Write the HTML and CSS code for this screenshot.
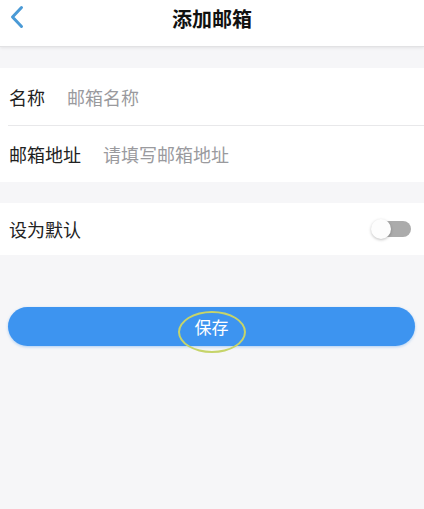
FILE: index.html
```html
<!DOCTYPE html>
<html lang="zh">
<head>
<meta charset="utf-8">
<link rel="stylesheet" href="styles.css">
</head>
<body>
<header class="topbar">
  <span class="back">
    <svg width="18" height="24" viewBox="0 0 18 24"><path d="M13.5 2.5 L4.5 12 L13.5 21.5" fill="none" stroke="#4a9ad6" stroke-width="3" stroke-linecap="round" stroke-linejoin="round"/></svg>
  </span>
  <h1 class="title">添加邮箱</h1>
</header>
<section class="group first">
  <div class="row">
    <span class="label">名称</span>
    <span class="placeholder">邮箱名称</span>
  </div>
  <div class="row">
    <span class="label">邮箱地址</span>
    <span class="placeholder">请填写邮箱地址</span>
  </div>
</section>
<section class="group second">
  <div class="row switch-row">
    <span class="label">设为默认</span>
    <span class="toggle"><span class="knob"></span></span>
  </div>
</section>
<div class="actions">
  <button class="save"><span class="save-text">保存</span></button>
</div>
</body>
</html>
```
FILE: styles.css
```css
html, body {
  margin: 0;
  padding: 0;
  background: #f6f6f8;
  font-family: "Noto Sans CJK SC", "Noto Sans", sans-serif;
  height: 100%;
}
.topbar {
  height: 46px;
  background: #fff;
  border-bottom: 1px solid #e2e2e4;
  box-shadow: 0 1px 3px rgba(0,0,0,0.08);
  display: flex;
  align-items: center;
  justify-content: center;
  position: relative;
}
.back {
  position: absolute;
  left: 8px;
  top: 5px;
  width: 18px;
  height: 24px;
}
.back svg { display: block; }
.title {
  margin: 0;
  font-size: 20px;
  font-weight: bold;
  color: #111;
  line-height: 1;
  margin-top: -9px;
}
.group {
  background: #fff;
  padding-left: 8px;
}
.group.first { margin-top: 21px; }
.group.second { margin-top: 21px; }
.row {
  display: flex;
  align-items: center;
  height: 56px;
  font-size: 18px;
}
.group.first .row:first-child {
  height: 57px;
  border-bottom: 1px solid #e8e8ea;
}
.label {
  color: #222;
  margin-left: 1px;
  margin-right: 22px;
}
.placeholder {
  color: #9a9a9e;
}
.switch-row {
  height: 52px;
  justify-content: space-between;
  padding-right: 13px;
}
.toggle {
  position: relative;
  width: 30px;
  height: 16px;
  border-radius: 8px;
  background: #ababab;
}
.knob {
  position: absolute;
  left: -10px;
  top: -2px;
  width: 20px;
  height: 20px;
  border-radius: 50%;
  background: #fdfdfd;
  box-shadow: 0 1px 3px rgba(0,0,0,0.25);
}
.actions {
  padding: 52px 9px 0 8px;
}
.save {
  display: flex;
  align-items: center;
  justify-content: center;
  width: 100%;
  height: 39px;
  border: none;
  border-radius: 20px;
  background: #3d94f0;
  box-shadow: 0 1px 3px rgba(61,148,240,0.4);
  color: #fff;
  font-family: inherit;
  font-size: 17px;
  padding: 0;
}
.save-text {
  position: relative;
  display: inline-block;
  line-height: 1;
}
.save-text::after {
  content: "";
  position: absolute;
  left: 50%;
  top: 50%;
  width: 64px;
  height: 38px;
  margin-left: -34px;
  margin-top: -16px;
  border: 2px solid #c6d46a;
  border-radius: 50%;
}
```
